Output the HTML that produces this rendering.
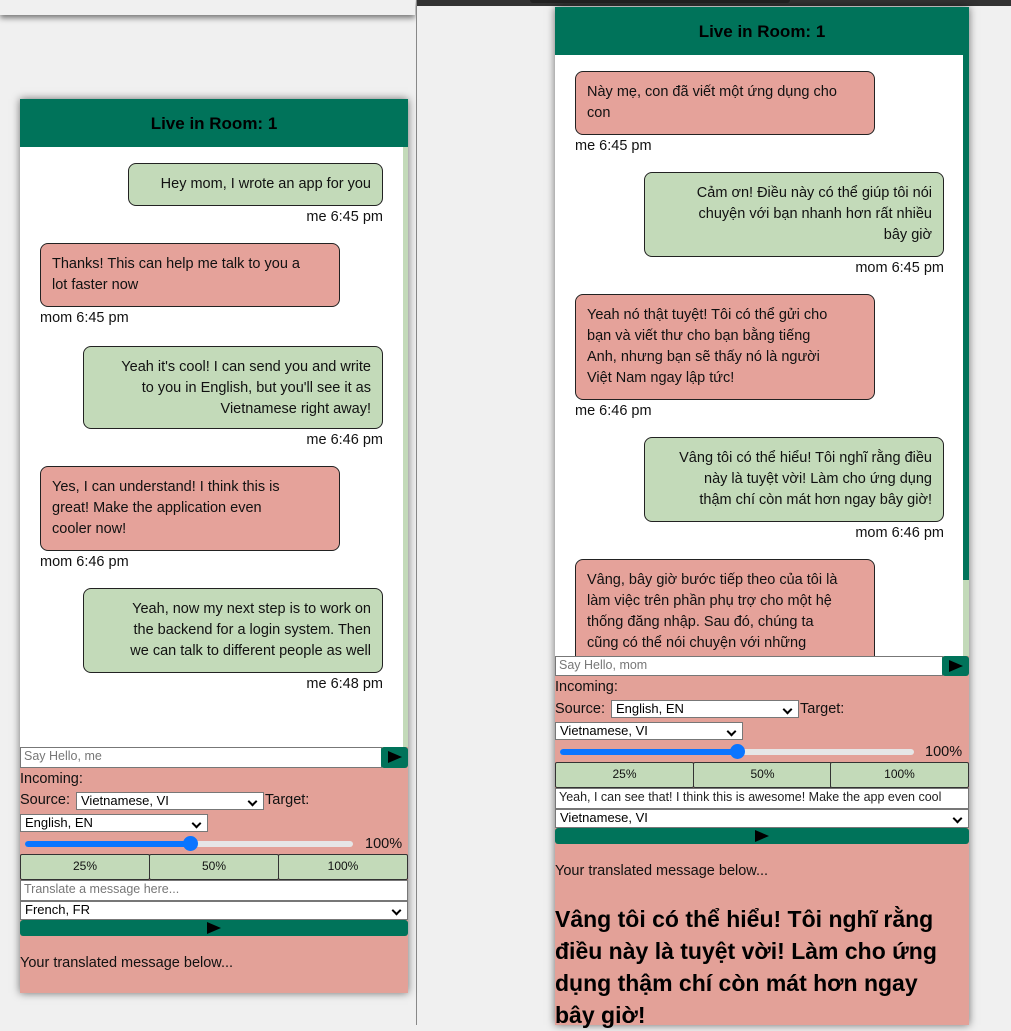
<!DOCTYPE html>
<html><head><meta charset="utf-8"><style>
*{box-sizing:border-box;margin:0;padding:0}
body{width:1011px;height:1025px;overflow:hidden;background:#f0f0f0;position:relative;font-family:"Liberation Sans",sans-serif;color:#111}
.a{position:absolute}
.hdr{background:#00735a;font-weight:bold;font-size:17px;text-align:center;color:#000}
.b{position:absolute;border:1px solid #222;border-radius:8px;font-size:14.5px;line-height:21px;padding:10px 11px;white-space:nowrap;overflow:hidden}
.g{background:#c3dab9;text-align:right}
.p{background:#e5a29a;text-align:left}
.t{position:absolute;font-size:14.5px;white-space:nowrap}
.pink{background:#e3a198}
.inp{position:absolute;background:#fff;border:1px solid #777;font-size:12.5px;color:#777;padding:1px 3px;white-space:nowrap;overflow:hidden}
.sel{position:absolute;background:#fff;border:1px solid #777;font-size:13px;color:#000;padding:0 4px;white-space:nowrap}
.sel:after{content:"";position:absolute;right:7px;top:5px;width:5px;height:5px;border-right:2px solid #000;border-bottom:2px solid #000;transform:rotate(45deg)}
.lbl{position:absolute;font-size:14.5px;white-space:nowrap}
.btn{position:absolute;background:#c3dab9;border:1px solid #333;border-radius:2px;font-size:12px;text-align:center;line-height:23px}
.send{position:absolute;background:#00735a;border-radius:3px}
.tri{position:absolute;width:0;height:0;border-left:14px solid #000;border-top:6px solid transparent;border-bottom:6px solid transparent}
.trk{position:absolute;height:6px;border-radius:3px;background:#e6e6e6}
.fill{position:absolute;height:6px;border-radius:3px;background:#0d6efd;background:#0a75ff}
.knob{position:absolute;width:15px;height:15px;border-radius:50%;background:#0a75ff}
</style></head><body>
<!-- top left window -->
<div class="a" style="left:0;top:0;width:415px;height:15px;background:#f0f0f0;box-shadow:0 3px 6px rgba(0,0,0,.5)"></div>
<!-- right window -->
<div class="a" style="left:416px;top:0;width:595px;height:1025px;background:#f0f0f0;border-left:1px solid #888"></div>
<div class="a" style="left:417px;top:0;width:594px;height:6px;background:#333"></div>
<div class="a" style="left:530px;top:0;width:260px;height:3px;background:#222;border-radius:0 0 4px 4px"></div>

<!-- LEFT APP -->
<div class="a pink" style="left:20px;top:99px;width:388px;height:894px;box-shadow:0 0 8px rgba(0,0,0,.55)"></div>
<div class="a hdr" style="left:20px;top:99px;width:388px;height:48px;line-height:50px">Live in Room: 1</div>
<div class="a" style="left:20px;top:147px;width:388px;height:600px;background:#fff"></div>
<div class="a" style="left:403px;top:147px;width:5px;height:600px;background:#c3dab9"></div>

<div class="b g" style="left:128px;top:163px;width:255px;height:43px">Hey mom, I wrote an app for you</div>
<div class="t" style="right:628px;top:209px">me 6:45 pm</div>
<div class="b p" style="left:40px;top:243px;width:300px;height:64px">Thanks! This can help me talk to you a<br>lot faster now</div>
<div class="t" style="left:40px;top:310px">mom 6:45 pm</div>
<div class="b g" style="left:83px;top:346px;width:300px;height:83px">Yeah it's cool! I can send you and write<br>to you in English, but you'll see it as<br>Vietnamese right away!</div>
<div class="t" style="right:628px;top:432px">me 6:46 pm</div>
<div class="b p" style="left:40px;top:466px;width:300px;height:85px">Yes, I can understand! I think this is<br>great! Make the application even<br>cooler now!</div>
<div class="t" style="left:40px;top:554px">mom 6:46 pm</div>
<div class="b g" style="left:83px;top:588px;width:300px;height:85px">Yeah, now my next step is to work on<br>the backend for a login system. Then<br>we can talk to different people as well</div>
<div class="t" style="right:628px;top:676px">me 6:48 pm</div>

<div class="inp" style="left:20px;top:747px;width:362px;height:21px">Say Hello, me</div>
<div class="send" style="left:381px;top:747px;width:27px;height:21px"><div class="tri" style="left:7px;top:4px"></div></div>
<div class="lbl" style="left:20px;top:771px">Incoming:</div>
<div class="lbl" style="left:20px;top:792px">Source:</div>
<div class="sel" style="left:76px;top:792px;width:188px;height:18px">Vietnamese, VI</div>
<div class="lbl" style="left:265px;top:792px">Target:</div>
<div class="sel" style="left:20px;top:814px;width:188px;height:18px">English, EN</div>
<div class="trk" style="left:25px;top:841px;width:328px"></div>
<div class="fill" style="left:25px;top:841px;width:168px"></div>
<div class="knob" style="left:183px;top:836px"></div>
<div class="lbl" style="left:365px;top:836px">100%</div>
<div class="btn" style="left:20px;top:854px;width:130px;height:26px">25%</div>
<div class="btn" style="left:149px;top:854px;width:130px;height:26px">50%</div>
<div class="btn" style="left:278px;top:854px;width:130px;height:26px">100%</div>
<div class="inp" style="left:20px;top:880px;width:388px;height:21px">Translate a message here...</div>
<div class="sel" style="left:20px;top:901px;width:388px;height:19px">French, FR</div>
<div class="send" style="left:20px;top:920px;width:388px;height:16px"><div class="tri" style="left:187px;top:2px"></div></div>
<div class="lbl" style="left:20px;top:955px">Your translated message below...</div>

<!-- RIGHT APP -->
<div class="a pink" style="left:555px;top:7px;width:414px;height:1018px;box-shadow:0 0 8px rgba(0,0,0,.55)"></div>
<div class="a hdr" style="left:555px;top:7px;width:414px;height:48px;line-height:50px">Live in Room: 1</div>
<div class="a" style="left:555px;top:55px;width:414px;height:601px;background:#fff"></div>
<div class="a" style="left:963px;top:55px;width:6px;height:525px;background:#00735a"></div>
<div class="a" style="left:963px;top:580px;width:6px;height:76px;background:#c3dab9"></div>

<div class="b p" style="left:575px;top:71px;width:300px;height:64px">Này mẹ, con đã viết một ứng dụng cho<br>con</div>
<div class="t" style="left:575px;top:138px">me 6:45 pm</div>
<div class="b g" style="left:644px;top:172px;width:300px;height:85px">Cảm ơn! Điều này có thể giúp tôi nói<br>chuyện với bạn nhanh hơn rất nhiều<br>bây giờ</div>
<div class="t" style="right:67px;top:260px">mom 6:45 pm</div>
<div class="b p" style="left:575px;top:294px;width:300px;height:106px">Yeah nó thật tuyệt! Tôi có thể gửi cho<br>bạn và viết thư cho bạn bằng tiếng<br>Anh, nhưng bạn sẽ thấy nó là người<br>Việt Nam ngay lập tức!</div>
<div class="t" style="left:575px;top:403px">me 6:46 pm</div>
<div class="b g" style="left:644px;top:437px;width:300px;height:85px">Vâng tôi có thể hiểu! Tôi nghĩ rằng điều<br>này là tuyệt vời! Làm cho ứng dụng<br>thậm chí còn mát hơn ngay bây giờ!</div>
<div class="t" style="right:67px;top:525px">mom 6:46 pm</div>
<div class="a" style="left:555px;top:559px;width:408px;height:97px;overflow:hidden">
<div class="b p" style="left:20px;top:0;width:300px;height:130px">Vâng, bây giờ bước tiếp theo của tôi là<br>làm việc trên phần phụ trợ cho một hệ<br>thống đăng nhập. Sau đó, chúng ta<br>cũng có thể nói chuyện với những</div>
</div>

<div class="inp" style="left:555px;top:656px;width:388px;height:20px">Say Hello, mom</div>
<div class="send" style="left:942px;top:656px;width:27px;height:20px"><div class="tri" style="left:7px;top:4px"></div></div>
<div class="lbl" style="left:555px;top:679px">Incoming:</div>
<div class="lbl" style="left:555px;top:701px">Source:</div>
<div class="sel" style="left:611px;top:700px;width:188px;height:18px">English, EN</div>
<div class="lbl" style="left:800px;top:701px">Target:</div>
<div class="sel" style="left:555px;top:722px;width:188px;height:18px">Vietnamese, VI</div>
<div class="trk" style="left:560px;top:749px;width:354px"></div>
<div class="fill" style="left:560px;top:749px;width:180px"></div>
<div class="knob" style="left:730px;top:744px"></div>
<div class="lbl" style="left:925px;top:744px">100%</div>
<div class="btn" style="left:555px;top:762px;width:139px;height:26px">25%</div>
<div class="btn" style="left:693px;top:762px;width:139px;height:26px">50%</div>
<div class="btn" style="left:830px;top:762px;width:139px;height:26px">100%</div>
<div class="inp" style="left:555px;top:788px;width:414px;height:21px;color:#222">Yeah, I can see that! I think this is awesome! Make the app even cool</div>
<div class="sel" style="left:555px;top:809px;width:414px;height:19px">Vietnamese, VI</div>
<div class="send" style="left:555px;top:828px;width:414px;height:16px"><div class="tri" style="left:200px;top:2px"></div></div>
<div class="lbl" style="left:555px;top:863px">Your translated message below...</div>
<div class="a" style="left:555px;top:903px;width:414px;font-size:23px;font-weight:bold;line-height:32px;color:#000">Vâng tôi có thể hiểu! Tôi nghĩ rằng<br>điều này là tuyệt vời! Làm cho ứng<br>dụng thậm chí còn mát hơn ngay<br>bây giờ!</div>
</body></html>
